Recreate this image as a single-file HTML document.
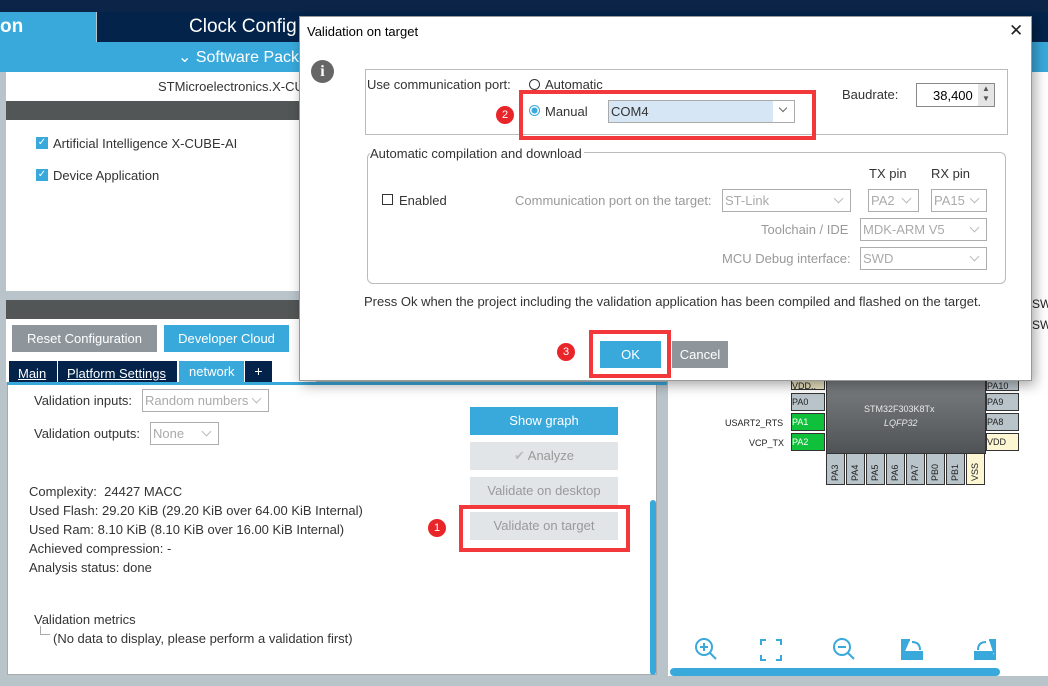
<!DOCTYPE html>
<html><head><meta charset="utf-8"><style>
*{margin:0;padding:0;box-sizing:border-box}
body{width:1048px;height:686px;position:relative;overflow:hidden;background:#b9c4ca;font-family:"Liberation Sans",sans-serif;font-size:13px;color:#333}
.a{position:absolute}
.t{position:absolute;white-space:nowrap}
.btn{position:absolute;color:#fff;text-align:center;font-size:13px}
.sel{position:absolute;border:1px solid #adadad;background:#fff;color:#aaa;font-size:13px;padding-left:2px}
.sel:after{content:"";position:absolute;right:8px;top:5px;width:6px;height:6px;border-right:1px solid #bbb;border-bottom:1px solid #bbb;transform:rotate(45deg)}
.red{position:absolute;border:4px solid #f3383b}
.num{position:absolute;width:18px;height:18px;border-radius:50%;background:#e8262a;color:#fff;font-size:11px;text-align:center;line-height:18px}
.pin{position:absolute;background:#b9c4ca;border:1px solid #333;font-size:9px;color:#222}
.bp span{position:absolute;left:3px;bottom:3px;transform:rotate(-90deg);transform-origin:left bottom;margin-left:10px;font-size:9px}
</style></head><body>
<div class="a" style="left:0;top:0;width:1048px;height:12px;background:#0b2447"></div>
<div class="a" style="left:0;top:12px;width:96px;height:30px;background:#39a9dc"></div>
<div class="t" style="left:0;top:16px;color:#fff;font-size:19px;font-weight:bold">on</div>
<div class="a" style="left:97px;top:12px;width:951px;height:30px;background:#03234b"></div>
<div class="t" style="left:189px;top:16px;color:#fff;font-size:19px">Clock Config</div>
<div class="a" style="left:0;top:42px;width:1048px;height:30px;background:#39a9dc"></div>
<div class="t" style="left:178px;top:47px;color:#fff;font-size:16px">⌄ Software Pack</div>

<div class="a" style="left:6px;top:72px;width:310px;height:29px;background:#fff"></div>
<div class="t" style="left:158px;top:79px">STMicroelectronics.X-CU</div>
<div class="a" style="left:6px;top:101px;width:310px;height:19px;background:#535656"></div>
<div class="a" style="left:6px;top:120px;width:310px;height:171px;background:#fff"></div>
<div class="a" style="left:36px;top:137px;width:12px;height:12px;background:#39a9dc;color:#fff;font-size:10px;line-height:12px;text-align:center">✓</div>
<div class="t" style="left:53px;top:136px">Artificial Intelligence X-CUBE-AI</div>
<div class="a" style="left:36px;top:169px;width:12px;height:12px;background:#39a9dc;color:#fff;font-size:10px;line-height:12px;text-align:center">✓</div>
<div class="t" style="left:53px;top:168px">Device Application</div>
<div class="a" style="left:6px;top:300px;width:310px;height:19px;background:#535656"></div>
<div class="a" style="left:6px;top:319px;width:310px;height:63px;background:#fff"></div>
<div class="btn" style="left:12px;top:325px;width:145px;height:27px;background:#8e969c;line-height:27px">Reset Configuration</div>
<div class="btn" style="left:164px;top:325px;width:125px;height:27px;background:#39a9dc;line-height:27px">Developer Cloud</div>
<div class="a" style="left:9px;top:361px;width:48px;height:22px;background:#03234b"></div>
<div class="t" style="left:18px;top:366px;color:#fff;font-size:13px;text-decoration:underline">Main</div>
<div class="a" style="left:58px;top:361px;width:119px;height:22px;background:#03234b"></div>
<div class="t" style="left:67px;top:366px;color:#fff;font-size:13px;text-decoration:underline">Platform Settings</div>
<div class="a" style="left:179px;top:361px;width:65px;height:22px;background:#39a9dc"></div>
<div class="t" style="left:189px;top:364px;color:#fff;font-size:13px">network</div>
<div class="a" style="left:245px;top:361px;width:27px;height:22px;background:#03234b;color:#fff;text-align:center;font-size:14px;line-height:20px">+</div>
<div class="a" style="left:7px;top:382px;width:660px;height:3px;background:#39a9dc"></div>

<div class="a" style="left:7px;top:385px;width:650px;height:290px;background:#fff;border:1px solid #aaa;border-top:none"></div>
<div class="a" style="left:650px;top:500px;width:6px;height:175px;background:#39a9dc;border-radius:3px"></div>
<div class="t" style="left:34px;top:393px;font-size:13px">Validation inputs:</div>
<div class="sel" style="left:142px;top:389px;width:127px;height:23px;line-height:21px">Random numbers</div>
<div class="t" style="left:34px;top:426px;font-size:13px">Validation outputs:</div>
<div class="sel" style="left:150px;top:422px;width:69px;height:23px;line-height:21px">None</div>
<div class="t" style="left:29px;top:482px;line-height:19px;font-size:13px">Complexity:&nbsp; 24427 MACC<br>Used Flash: 29.20 KiB (29.20 KiB over 64.00 KiB Internal)<br>Used Ram: 8.10 KiB (8.10 KiB over 16.00 KiB Internal)<br>Achieved compression: -<br>Analysis status: done</div>
<div class="t" style="left:34px;top:612px">Validation metrics</div>
<div class="a" style="left:40px;top:626px;width:10px;height:9px;border-left:1px solid #aaa;border-bottom:1px solid #aaa"></div>
<div class="t" style="left:53px;top:631px">(No data to display, please perform a validation first)</div>
<div class="btn" style="left:470px;top:407px;width:148px;height:28px;background:#39a9dc;line-height:28px">Show graph</div>
<div class="btn" style="left:470px;top:442px;width:148px;height:28px;background:#e2e5e8;line-height:28px;color:#999"><span style="color:#bbb">✔</span> Analyze</div>
<div class="btn" style="left:470px;top:477px;width:148px;height:28px;background:#e2e5e8;line-height:28px;color:#999">Validate on desktop</div>
<div class="btn" style="left:470px;top:512px;width:148px;height:28px;background:#e2e5e8;line-height:28px;color:#999">Validate on target</div>
<div class="red" style="left:459px;top:505px;width:171px;height:47px"></div>
<div class="num" style="left:428px;top:519px">1</div>

<div class="a" style="left:668px;top:72px;width:380px;height:604px;background:#fff"></div>
<div class="a" style="left:670px;top:668px;width:330px;height:8px;background:#39a9dc;border-radius:4px"></div>
<div class="t" style="left:1032px;top:297px;font-size:12px;color:#222">SWD</div>
<div class="t" style="left:1032px;top:318px;font-size:12px;color:#222">SWD</div>
<div class="a" style="left:826px;top:380px;width:160px;height:74px;background:linear-gradient(#7a7e81,#4f5355);border:1px solid #333"></div>
<div class="t" style="left:864px;top:404px;color:#e8e8e8;font-size:9px">STM32F303K8Tx</div>
<div class="t" style="left:884px;top:418px;color:#e8e8e8;font-size:9px;font-style:italic">LQFP32</div>
<div class="pin" style="left:791px;top:380px;width:34px;height:10px;background:#e9e2c0">VDD..</div>
<div class="pin" style="left:791px;top:393px;width:34px;height:18px;line-height:17px">PA0</div>
<div class="pin" style="left:791px;top:413px;width:34px;height:18px;line-height:17px;background:#0fc03a;color:#fff">PA1</div>
<div class="pin" style="left:791px;top:433px;width:34px;height:18px;line-height:17px;background:#0fc03a;color:#fff">PA2</div>
<div class="t" style="left:725px;top:418px;font-size:9px;color:#222">USART2_RTS</div>
<div class="t" style="left:749px;top:438px;font-size:9px;color:#222">VCP_TX</div>
<div class="pin" style="left:986px;top:380px;width:33px;height:11px">PA10</div>
<div class="pin" style="left:986px;top:393px;width:33px;height:18px;line-height:17px">PA9</div>
<div class="pin" style="left:986px;top:413px;width:33px;height:18px;line-height:17px">PA8</div>
<div class="pin" style="left:986px;top:433px;width:33px;height:18px;line-height:17px;background:#fdf6d2">VDD</div>
<div class="pin bp" style="left:826px;top:453px;width:19px;height:32px"><span>PA3</span></div>
<div class="pin bp" style="left:846px;top:453px;width:19px;height:32px"><span>PA4</span></div>
<div class="pin bp" style="left:866px;top:453px;width:19px;height:32px"><span>PA5</span></div>
<div class="pin bp" style="left:886px;top:453px;width:19px;height:32px"><span>PA6</span></div>
<div class="pin bp" style="left:906px;top:453px;width:19px;height:32px"><span>PA7</span></div>
<div class="pin bp" style="left:926px;top:453px;width:19px;height:32px"><span>PB0</span></div>
<div class="pin bp" style="left:946px;top:453px;width:19px;height:32px"><span>PB1</span></div>
<div class="pin bp" style="left:966px;top:453px;width:19px;height:32px;background:#fdf6d2"><span>VSS</span></div>
<svg class="a" style="left:690px;top:636px" width="360" height="28" fill="none" stroke="#39a9dc" stroke-width="2">
<circle cx="14" cy="11" r="8"/><path d="M20 17l6 6M10 11h8M14 7v8"/>
<path d="M76 4h-5v5M86 4h5v5M76 24h-5v-5M86 24h5v-5"/>
<circle cx="152" cy="11" r="8"/><path d="M158 17l6 6M148 11h8"/>
<path d="M212 22V4h8M212 16h20v7h-20z" fill="#39a9dc"/><path d="M222 6q8 0 8 8"/>
<path d="M305 22V4h-6M285 16h20v7h-20z" fill="#39a9dc"/><path d="M296 6q-8 0-8 8"/>
</svg>

<!-- dialog -->
<div class="a" style="left:299px;top:16px;width:733px;height:365px;background:#fff;border:1px solid #999;box-shadow:3px 4px 12px rgba(0,0,0,.35)"></div>
<div class="t" style="left:307px;top:24px;font-size:13px;color:#000">Validation on target</div>
<div class="t" style="left:1009px;top:21px;font-size:17px;color:#222">✕</div>
<div class="a" style="left:311px;top:60px;width:23px;height:23px;border-radius:50%;background:#666;color:#fff;font-weight:bold;text-align:center;font-size:16px;line-height:23px;font-family:'Liberation Serif',serif">i</div>
<div class="a" style="left:365px;top:69px;width:643px;height:66px;border:1px solid #bbb"></div>
<div class="t" style="left:367px;top:77px">Use communication port:</div>
<div class="a" style="left:529px;top:79px;width:11px;height:11px;border:1px solid #333;border-radius:50%"></div>
<div class="t" style="left:545px;top:77px;font-size:13px">Automatic</div>
<div class="a" style="left:529px;top:105px;width:11px;height:11px;border:1px solid #39a9dc;border-radius:50%;background:radial-gradient(#39a9dc 2.5px,#fff 3.5px)"></div>
<div class="t" style="left:545px;top:104px;font-size:13px">Manual</div>
<div class="a" style="left:608px;top:100px;width:187px;height:23px;background:#d7e6f4;border:1px solid #aaa"></div>
<div class="t" style="left:611px;top:104px;font-size:13px">COM4</div>
<div class="a" style="left:773px;top:101px;width:21px;height:21px;background:#fff"></div>
<div class="a" style="left:780px;top:105px;width:6px;height:6px;border-right:1px solid #666;border-bottom:1px solid #666;transform:rotate(45deg)"></div>
<div class="red" style="left:519px;top:90px;width:297px;height:50px"></div>
<div class="num" style="left:496px;top:106px">2</div>
<div class="t" style="left:842px;top:87px">Baudrate:</div>
<div class="a" style="left:916px;top:83px;width:79px;height:24px;border:1px solid #888;background:#fff"></div>
<div class="t" style="left:933px;top:88px;font-size:13px;color:#000">38,400</div>
<div class="a" style="left:978px;top:84px;width:16px;height:22px;background:#e5e5e5;color:#555;font-size:8px;line-height:10px;text-align:center">▲<br>▼</div>
<div class="a" style="left:367px;top:152px;width:639px;height:132px;border:1px solid #bbb;border-radius:6px"></div>
<div class="t" style="left:370px;top:146px;background:#fff;padding-right:2px">Automatic compilation and download</div>
<div class="a" style="left:382px;top:194px;width:11px;height:11px;border:1px solid #333"></div>
<div class="t" style="left:399px;top:193px;font-size:13px">Enabled</div>
<div class="t" style="left:515px;top:193px;color:#999">Communication port on the target:</div>
<div class="sel" style="left:722px;top:189px;width:129px;height:23px;line-height:21px">ST-Link</div>
<div class="t" style="left:869px;top:166px">TX pin</div>
<div class="t" style="left:931px;top:166px">RX pin</div>
<div class="sel" style="left:868px;top:189px;width:51px;height:23px;line-height:21px">PA2</div>
<div class="sel" style="left:931px;top:189px;width:56px;height:23px;line-height:21px">PA15</div>
<div class="t" style="left:761px;top:222px;color:#999">Toolchain / IDE</div>
<div class="sel" style="left:860px;top:218px;width:127px;height:23px;line-height:21px">MDK-ARM V5</div>
<div class="t" style="left:722px;top:251px;color:#999">MCU Debug interface:</div>
<div class="sel" style="left:860px;top:247px;width:127px;height:23px;line-height:21px">SWD</div>
<div class="t" style="left:364px;top:294px;font-size:13px">Press Ok when the project including the validation application has been compiled and flashed on the target.</div>
<div class="btn" style="left:600px;top:341px;width:61px;height:27px;background:#39a9dc;line-height:27px">OK</div>
<div class="btn" style="left:672px;top:341px;width:56px;height:27px;background:#8e969c;line-height:27px">Cancel</div>
<div class="red" style="left:589px;top:330px;width:82px;height:48px"></div>
<div class="num" style="left:557px;top:343px">3</div>
</body></html>
